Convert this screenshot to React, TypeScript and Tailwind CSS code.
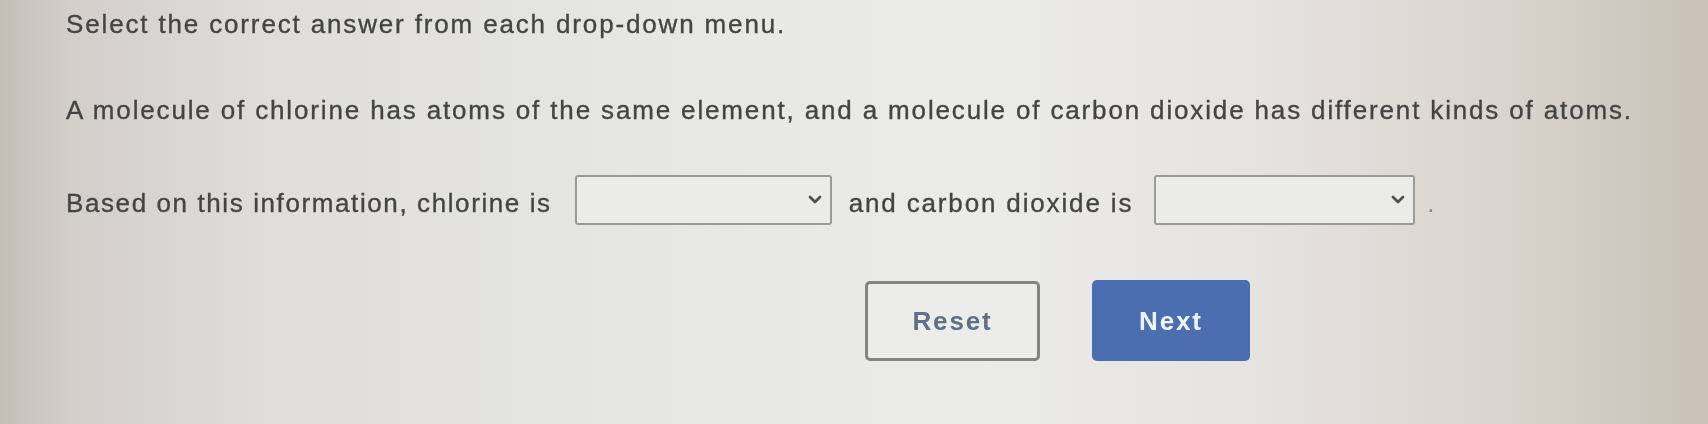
import React from 'react';

const font = "font-['Liberation_Sans',Arial,sans-serif]";

function Dropdown({ width }: { width: string }) {
  return (
    <div className={`${width} h-[50px] border-2 border-[#9a9a98] rounded-[3px] bg-[#ebebea] flex items-center justify-end pr-[8px] shrink-0`}>
      <svg width="14" height="10" viewBox="0 0 14 10" fill="none">
        <path d="M2 2 L7 7 L12 2" stroke="#505050" strokeWidth="2.8" strokeLinecap="round" strokeLinejoin="round" />
      </svg>
    </div>
  );
}

export default function App() {
  return (
    <div
      className={`w-full h-[424px] overflow-hidden bg-[linear-gradient(90deg,#c4beb6_0%,#d2cfc9_4%,#dfded9_16%,#e7e7e5_40%,#ebebea_58%,#e5e3df_74%,#d9d4cd_88%,#c9c1b8_100%)] ${font} text-[#444444] text-[26px] leading-[30px] tracking-[1.85px] [-webkit-text-stroke:0.35px_#444444]`}
    >
      <div className="pl-[66px] pt-[9px] blur-[0.4px]">
        <p>Select the correct answer from each drop-down menu.</p>

        <p className="mt-[56px]">
          A molecule of chlorine has atoms of the same element, and a molecule of carbon dioxide has different kinds of atoms.
        </p>

        <div className="mt-[50px] flex items-center">
          <span className="pt-[6px] tracking-[1.6px]">Based on this information, chlorine is</span>
          <div className="ml-[23px]">
            <Dropdown width="w-[257px]" />
          </div>
          <span className="pt-[6px] ml-[17px]">and carbon dioxide is</span>
          <div className="ml-[21px]">
            <Dropdown width="w-[261px]" />
          </div>
          <span className="pt-[6px] ml-[12px] text-[#8a8a8a] [-webkit-text-stroke:0px]">.</span>
        </div>

        <div className="mt-[55px] ml-[799px] flex items-center gap-[52px] [-webkit-text-stroke:0px]">
          <button className="w-[175px] h-[80px] border-[3px] border-[#848484] rounded-[5px] bg-[#ececeb] text-[#5d7189] font-bold">
            Reset
          </button>
          <button className="w-[158px] h-[81px] rounded-[5px] bg-[#4a6eb0] text-[#eef3fc] font-bold">
            Next
          </button>
        </div>
      </div>
    </div>
  );
}
